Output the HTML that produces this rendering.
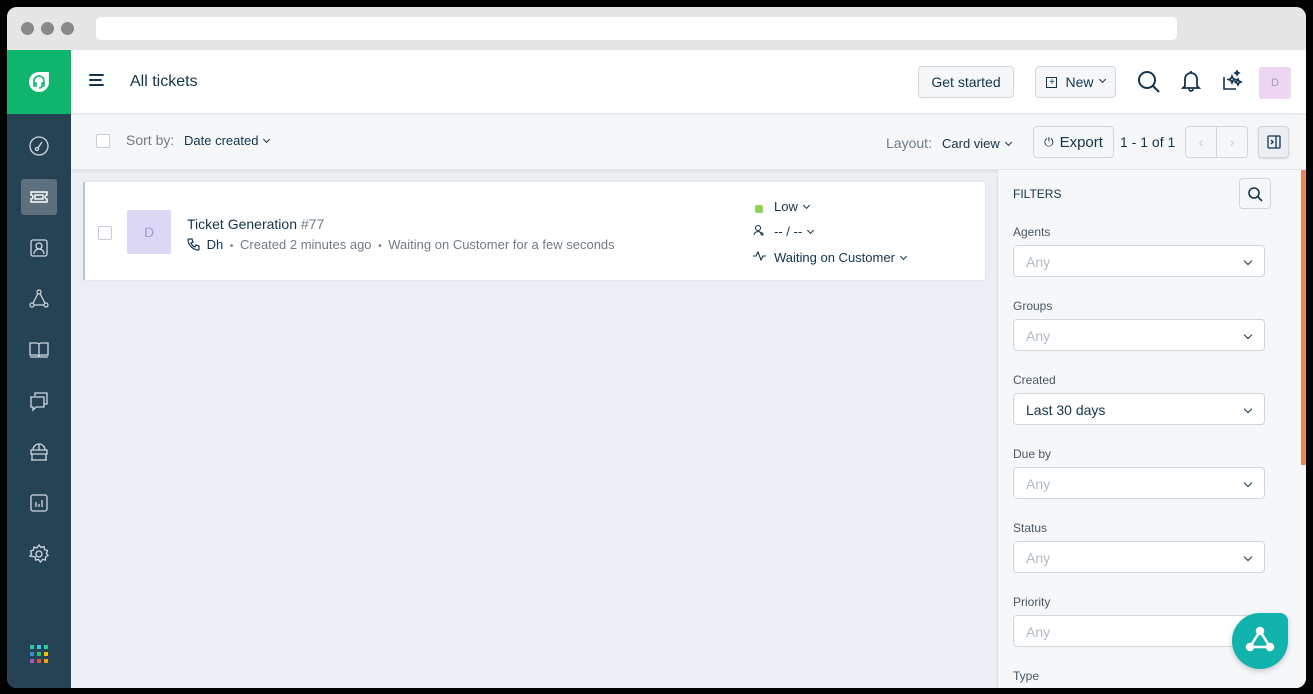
<!DOCTYPE html>
<html><head><meta charset="utf-8"><style>
*{box-sizing:border-box;margin:0;padding:0}
body{width:1313px;height:694px;background:#000;font-family:"Liberation Sans",sans-serif;position:relative;overflow:hidden;color:#12344d}
.win{position:absolute;left:7px;top:7px;width:1299px;height:681px;background:#ebeff3;border-radius:10px;overflow:hidden}
.abs{position:absolute}
.tb{left:0;top:0;width:1299px;height:43px;background:#e6e6e6}
.dot{width:13px;height:13px;border-radius:50%;background:#8a8a8a;top:15px}
.url{left:89px;top:10px;width:1081px;height:23px;background:#fff;border-radius:5px}
.side{left:0;top:43px;width:64px;height:638px;background:#264356}
.logo{left:0;top:43px;width:64px;height:64px;background:#0fb56d}
.hdr{left:64px;top:43px;width:1235px;height:64px;background:#fff;border-bottom:1px solid #e3e8ed}
.bar{left:64px;top:108px;width:1235px;height:55px;background:#f5f7f9;border-bottom:1px solid #dfe4e9;box-shadow:0 2px 3px rgba(0,0,0,.06)}
.btn{background:#f5f7f9;border:1px solid #cfd7df;border-radius:4px;font-size:14px;color:#12344d;display:flex;align-items:center;justify-content:center}
.card{left:76px;top:174px;width:903px;height:100px;background:#fff;border:1px solid #e3e8ed;border-left:2px solid #bcc4cc;border-radius:3px}
.cb{width:14px;height:14px;border:1px solid #c5ced6;border-radius:2px;background:#fff}
.fp{left:990px;top:163px;width:309px;height:518px;background:#f5f7f9;border-left:1px solid #dfe4e9}
.lbl{font-size:12px;color:#475867}
.sel{width:252px;height:32px;background:#fff;border:1px solid #cfd7df;border-radius:4px;font-size:14px;color:#b0bac4;padding:8px 12px}
.sel:after{content:"";position:absolute;right:13px;top:12px;width:5px;height:5px;border-right:1.5px solid #12344d;border-bottom:1.5px solid #12344d;transform:rotate(45deg)}
.ic{left:20px;width:24px;height:24px}
.chev{display:inline-block;width:5px;height:5px;border-right:1.3px solid #12344d;border-bottom:1.3px solid #12344d;transform:rotate(45deg);margin-left:6px;position:relative;top:-3px}
.sep{font-size:10px;margin:0 3px}
</style></head><body>
<div class="win">
<div class="abs tb"></div>
<div class="abs dot" style="left:14px"></div><div class="abs dot" style="left:34px"></div><div class="abs dot" style="left:54px"></div>
<div class="abs url"></div>
<div class="abs side"></div>
<div class="abs logo"><svg width="64" height="64" viewBox="0 0 64 64"><path d="M22 32a10 10 0 0 1 10-10h10v10a10 10 0 0 1-10 10a10 10 0 0 1-10-10z" fill="#fff"/><path d="M27 34v-3a5 5 0 0 1 10 0v3M27 33h2v3h-2zM35 33h2v3h-2zM35 36q0 2-3 2" stroke="#0fb56d" stroke-width="1.6" fill="none"/></svg></div>
<svg class="abs ic" style="top:127px" viewBox="0 0 24 24" fill="none" stroke="#cfd7df" stroke-width="1.3"><circle cx="12" cy="12" r="9"/><circle cx="10" cy="15" r="1.5"/><path d="M11 14l4-6"/></svg>
<div class="abs" style="left:14px;top:172px;width:36px;height:36px;background:#5e707d;border-radius:3px"></div>
<svg class="abs ic" style="top:178px" viewBox="0 0 24 24" fill="none" stroke="#fff" stroke-width="1.4"><path d="M4 7h16v3a2 2 0 0 0 0 4v3H4v-3a2 2 0 0 0 0-4z"/><rect x="8" y="10" width="8" height="4"/></svg>
<svg class="abs ic" style="top:229px" viewBox="0 0 24 24" fill="none" stroke="#cfd7df" stroke-width="1.3"><rect x="4" y="4" width="16" height="16" rx="2"/><circle cx="12" cy="10" r="3"/><path d="M7 18a5 5 0 0 1 10 0"/></svg>
<svg class="abs ic" style="top:280px" viewBox="0 0 24 24" fill="none" stroke="#cfd7df" stroke-width="1.2"><circle cx="12" cy="5" r="2"/><circle cx="5" cy="18" r="2"/><circle cx="19" cy="18" r="2"/><path d="M10.8 6.8L6 16.2M13.2 6.8L18 16.2M7 18h10"/></svg>
<svg class="abs ic" style="top:331px" viewBox="0 0 24 24" fill="none" stroke="#cfd7df" stroke-width="1.3"><path d="M3 5h7a2 2 0 0 1 2 2v12a2 2 0 0 0-2-2H3zM21 5h-7a2 2 0 0 0-2 2v12a2 2 0 0 1 2-2h7zM3 19h18"/></svg>
<svg class="abs ic" style="top:382px" viewBox="0 0 24 24" fill="none" stroke="#cfd7df" stroke-width="1.3"><path d="M8 7V4h12v11h-3"/><path d="M4 8h13v10H9l-3 3v-3H4z"/></svg>
<svg class="abs ic" style="top:433px" viewBox="0 0 24 24" fill="none" stroke="#cfd7df" stroke-width="1.3"><path d="M6 10a6 6 0 0 1 12 0M12 4v6M4 10h16v4H4zM5 14v6h14v-6M4 20h16"/></svg>
<svg class="abs ic" style="top:484px" viewBox="0 0 24 24" fill="none" stroke="#cfd7df" stroke-width="1.3"><rect x="4" y="4" width="16" height="16" rx="2"/><path d="M9 16v-5M12 16v-3M15 16V9"/></svg>
<svg class="abs ic" style="top:535px" viewBox="0 0 24 24" fill="none" stroke="#cfd7df" stroke-width="1.3"><circle cx="12" cy="12" r="3"/><path d="M12 3l2 2.5 3-1 .5 3 3 1-1 3 1.5 2-2.5 1.5v3l-3-.5-2 2.5-2-2.5-3 .5v-3L3 14l1.5-2-1-3 3-1 .5-3 3 1z"/></svg>
<svg class="abs" style="left:23px;top:638px" width="18" height="18"><rect x="0" y="0" width="4" height="4" fill="#2ecc9a"/><rect x="7" y="0" width="4" height="4" fill="#3bc3e8"/><rect x="14" y="0" width="4" height="4" fill="#2ecc9a"/><rect x="0" y="7" width="4" height="4" fill="#2a8fd6"/><rect x="7" y="7" width="4" height="4" fill="#27c46b"/><rect x="14" y="7" width="4" height="4" fill="#f4c20d"/><rect x="0" y="14" width="4" height="4" fill="#a25bb0"/><rect x="7" y="14" width="4" height="4" fill="#e0533b"/><rect x="14" y="14" width="4" height="4" fill="#f4a10d"/></svg>
<div class="abs hdr">
 <svg class="abs" style="left:18px;top:23px" width="16" height="14"><path d="M1 2h13M1 7h11M1 12h13" stroke="#12344d" stroke-width="2" stroke-linecap="round"/></svg>
 <div class="abs" style="left:59px;top:23px;font-size:16px">All tickets</div>
 <div class="abs btn" style="left:847px;top:16px;width:96px;height:32px">Get started</div>
 <div class="abs btn" style="left:964px;top:16px;width:81px;height:32px"><span style="display:inline-block;width:11px;height:11px;border:1px solid #12344d;font-size:10px;line-height:9px;text-align:center;margin-right:8px">+</span>New<span class="chev"></span></div>
 <svg class="abs" style="left:1066px;top:20px" width="24" height="24" fill="none" stroke="#12344d" stroke-width="2"><circle cx="10" cy="10" r="8"/><path d="M16 16l6 6"/></svg>
 <svg class="abs" style="left:1109px;top:19px" width="22" height="24" fill="none" stroke="#12344d" stroke-width="1.8"><path d="M5 17V10a6 6 0 0 1 12 0v7l2 2H3zM11 2v2M9 20a2 2 0 0 0 4 0"/></svg>
 <svg class="abs" style="left:1150px;top:19px" width="24" height="24" fill="none" stroke="#12344d" stroke-width="1.6"><path d="M3 8v12h12"/><path d="M11 7l1 2.5 2.5 1-2.5 1-1 2.5-1-2.5-2.5-1 2.5-1zM17 10l1 2 2 1-2 1-1 2-1-2-2-1 2-1zM16 2l.7 1.3 1.3.7-1.3.7L16 6l-.7-1.3L14 4l1.3-.7z"/></svg>
 <div class="abs" style="left:1188px;top:17px;width:32px;height:32px;background:#ecd6f2;border-radius:3px;color:#9aa6b2;font-size:11px;text-align:center;line-height:32px">D</div>
</div>
<div class="abs bar">
 <div class="abs cb" style="left:25px;top:19px"></div>
 <div class="abs" style="left:55px;top:17px;font-size:14px;color:#6f7c87">Sort by:</div>
 <div class="abs" style="left:113px;top:18px;font-size:13px">Date created<span class="chev"></span></div>
 <div class="abs" style="left:815px;top:20px;font-size:14px;color:#6f7c87">Layout:</div>
 <div class="abs" style="left:871px;top:21px;font-size:13px">Card view<span class="chev"></span></div>
 <div class="abs btn" style="left:962px;top:11px;width:81px;height:32px;font-size:15px"><span style="font-size:12px;margin-right:6px">⏻</span>Export</div>
 <div class="abs" style="left:1049px;top:19px;font-size:14px">1 - 1 of 1</div>
 <div class="abs btn" style="left:1114px;top:11px;width:32px;height:32px;border-radius:4px 0 0 4px;color:#c5ced6">‹</div>
 <div class="abs btn" style="left:1145px;top:11px;width:32px;height:32px;border-radius:0 4px 4px 0;color:#c5ced6">›</div>
 <div class="abs btn" style="left:1187px;top:11px;width:31px;height:32px;background:#ebeff3;box-shadow:0 1px 2px rgba(0,0,0,.15)"><svg width="14" height="14" fill="none" stroke="#12344d" stroke-width="1.3"><rect x="1" y="1" width="12" height="12" rx="1"/><path d="M9 1v12M4 5l2 2-2 2"/></svg></div>
</div>
<div class="abs card">
 <div class="abs cb" style="left:13px;top:44px"></div>
 <div class="abs" style="left:42px;top:28px;width:44px;height:44px;background:#dcd7f5;border-radius:2px;color:#a39dd0;font-size:14px;text-align:center;line-height:44px">D</div>
 <div class="abs" style="left:102px;top:34px;font-size:14px">Ticket Generation <span style="color:#6f7c87">#77</span></div>
 <div class="abs" style="left:102px;top:55px;font-size:13px;color:#6f7c87;white-space:nowrap"><svg width="13" height="13" style="vertical-align:-2px" fill="none" stroke="#12344d" stroke-width="1.2"><path d="M2 1h3l1 3-2 1a7 7 0 0 0 4 4l1-2 3 1v3a1 1 0 0 1-1 1A11 11 0 0 1 1 2a1 1 0 0 1 1-1z"/></svg> <span style="color:#12344d;margin-left:3px">Dh</span> <span class="sep">•</span> Created 2 minutes ago <span class="sep">•</span> Waiting on Customer for a few seconds</div>
 <div class="abs" style="left:670px;top:23px;width:8px;height:8px;background:#8ed35a;border-radius:2px"></div>
 <div class="abs" style="left:689px;top:17px;font-size:13px">Low<span class="chev"></span></div>
 <svg class="abs" style="left:668px;top:42px" width="12" height="12" fill="none" stroke="#12344d" stroke-width="1.1"><circle cx="5" cy="4" r="2.5"/><path d="M1 11a4 4 0 0 1 7-2M9 8v4M7 10h4"/></svg>
 <div class="abs" style="left:689px;top:42px;font-size:13px">-- / --<span class="chev"></span></div>
 <svg class="abs" style="left:668px;top:69px" width="13" height="10" fill="none" stroke="#12344d" stroke-width="1.1"><path d="M0 5h3l2-4 3 8 2-4h3"/></svg>
 <div class="abs" style="left:689px;top:68px;font-size:13px">Waiting on Customer<span class="chev"></span></div>
</div>
<div class="abs fp">
 <div class="abs" style="left:15px;top:17px;font-size:12px;color:#12344d">FILTERS</div>
 <div class="abs btn" style="left:241px;top:8px;width:32px;height:31px"><svg width="16" height="16" fill="none" stroke="#12344d" stroke-width="1.6"><circle cx="7" cy="7" r="5"/><path d="M11 11l4 4"/></svg></div>
 <div class="abs lbl" style="left:15px;top:55px">Agents</div><div class="abs sel" style="left:15px;top:75px">Any</div>
 <div class="abs lbl" style="left:15px;top:129px">Groups</div><div class="abs sel" style="left:15px;top:149px">Any</div>
 <div class="abs lbl" style="left:15px;top:203px">Created</div><div class="abs sel" style="left:15px;top:223px;color:#12344d">Last 30 days</div>
 <div class="abs lbl" style="left:15px;top:277px">Due by</div><div class="abs sel" style="left:15px;top:297px">Any</div>
 <div class="abs lbl" style="left:15px;top:351px">Status</div><div class="abs sel" style="left:15px;top:371px">Any</div>
 <div class="abs lbl" style="left:15px;top:425px">Priority</div><div class="abs sel" style="left:15px;top:445px">Any</div>
 <div class="abs lbl" style="left:15px;top:499px">Type</div>
 <div class="abs" style="left:303px;top:0px;width:6px;height:295px;background:#e8875c"></div>
</div>
<div class="abs" style="left:1225px;top:606px;width:56px;height:56px;background:#12b2ad;border-radius:50% 8px 50% 50%;box-shadow:0 2px 6px rgba(0,0,0,.2)"><svg width="56" height="56" fill="none" stroke="#fff" stroke-width="2.5"><path d="M28 18L18 34h20z"/><circle cx="28" cy="18" r="3" fill="#fff"/><circle cx="18" cy="34" r="3" fill="#fff"/><circle cx="38" cy="34" r="3" fill="#fff"/></svg></div>
</div>
</body></html>
